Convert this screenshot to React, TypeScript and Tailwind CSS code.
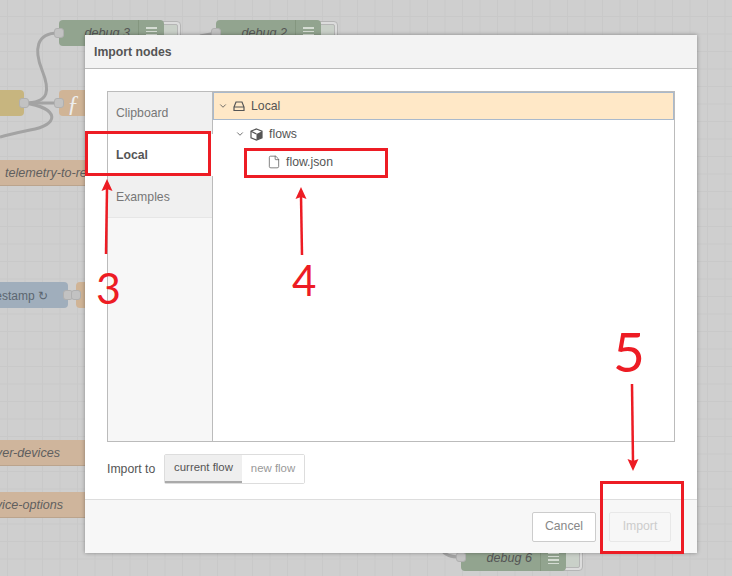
import React from 'react';
import { ChevronDown, File } from 'lucide-react';

const font = "font-['Liberation_Sans',Arial,sans-serif]";

const Port = ({ className }: { className: string }) => (
  <div className={`absolute w-[10px] h-[10px] rounded-[3px] bg-[#c2c2c2] border border-[#b0b0b0] ${className}`} />
);

const DebugNode = ({ className, label }: { className: string; label: string }) => (
  <div className={`absolute w-[122px] h-[26px] ${className}`}>
    <div className="absolute right-0 top-[1px] w-[30px] h-[25px] rounded-[4px] border border-[#b5b5b5] bg-[#dcdcdc] p-[2px]">
      <div className="w-full h-full rounded-[2px] border border-[#b5b5b5] bg-[#c9d0c8]" />
    </div>
    <div className="absolute left-0 top-0 w-[105px] h-[26px] rounded-[4px] bg-[#92a48f] flex items-center">
      <span className="flex-1 text-right pr-[8px] italic text-[12.6px] text-[#555] whitespace-nowrap">{label}</span>
      <div className="w-[26px] h-full border-l border-[#84967f] flex flex-col items-center justify-center gap-[2px]">
        <div className="w-[11px] h-[1.5px] bg-[#d5dcd3]" />
        <div className="w-[11px] h-[1.5px] bg-[#d5dcd3]" />
        <div className="w-[11px] h-[1.5px] bg-[#d5dcd3]" />
        <div className="w-[11px] h-[1.5px] bg-[#d5dcd3]" />
      </div>
    </div>
  </div>
);

const LinkNode = ({ top, label }: { top: string; label: string }) => (
  <div className={`absolute left-0 w-[90px] h-[26px] pt-[1px] bg-[#cfb59c] border-b border-[#bba48d] flex items-center italic text-[12.6px] text-[#5f5f5f] whitespace-nowrap ${top}`}>
    {label}
  </div>
);

const Canvas = () => (
  <>
    <svg className="absolute inset-0" width="732" height="576" fill="none" stroke="#a3a3a3" strokeWidth="3">
      <path d="M24 103 C 50 103, 50 90, 42 70 C 34 50, 36 33, 58 33" />
      <path d="M24 103 L 60 103" />
      <path d="M24 103 C 60 108, 60 125, 30 130 C 15 133, 8 135, 0 137" />
      <path d="M200 36 L 216 33" />
      <path d="M440 548 C 445 556, 452 557, 460 557" />
    </svg>
    <DebugNode className="left-[59px] top-[20px]" label="debug 3" />
    <DebugNode className="left-[216px] top-[20px]" label="debug 2" />
    <DebugNode className="left-[461px] top-[545px]" label="debug 6" />
    <Port className="left-[54px] top-[28px]" />
    <Port className="left-[211px] top-[28px]" />
    <Port className="left-[456px] top-[552px]" />
    <div className="absolute left-0 top-[90px] w-[24px] h-[26px] rounded-r-[4px] bg-[#c7b57f]" />
    <div className="absolute left-[59px] top-[90px] w-[30px] h-[26px] rounded-[4px] bg-[#d0b496] pl-[8px] text-[24px] leading-[26px] italic text-[#eeeeee] font-['Liberation_Serif',serif]">ƒ</div>
    <Port className="left-[19px] top-[98px]" />
    <Port className="left-[54px] top-[98px]" />
    <LinkNode top="top-[160px] pl-[5px]" label="telemetry-to-rem" />
    <div className="absolute left-0 top-[282px] w-[68px] h-[26px] pt-[1px] rounded-r-[4px] bg-[#a0aebc] flex items-center justify-end pr-[20px] text-[12px] text-[#5c6670] whitespace-nowrap">estamp ↻</div>
    <div className="absolute left-[76px] top-[282px] w-[14px] h-[26px] rounded-l-[4px] bg-[#d0b496]" />
    <Port className="left-[63px] top-[290px]" />
    <Port className="left-[71px] top-[290px]" />
    <LinkNode top="top-[440px] justify-end pr-[30px]" label="ver-devices" />
    <LinkNode top="top-[492px] justify-end pr-[27px]" label="vice-options" />
  </>
);

const Annotations = () => (
  <>
    <div className="absolute left-[85px] top-[131px] w-[126px] h-[45px] border-[3px] border-[#ed1c24]" />
    <div className="absolute left-[244px] top-[148px] w-[144px] h-[30px] border-[3px] border-[#ed1c24]" />
    <div className="absolute left-[600px] top-[481px] w-[84px] h-[73px] border-[3px] border-[#ed1c24]" />
    <svg className="absolute inset-0" width="732" height="576" fill="#ed1c24" stroke="#ed1c24">
      <path d="M106 254 L107 188" strokeWidth="2.5" />
      <path d="M107 179 L112.5 191 L107 189 L101.5 191 Z" strokeWidth="0" />
      <path d="M302 255 L301 196" strokeWidth="2.5" />
      <path d="M301 187 L306.5 199 L301 197 L295.5 199 Z" strokeWidth="0" />
      <path d="M632 384 L633 462" strokeWidth="2.5" />
      <path d="M633 471 L627.5 459 L633 461 L638.5 459 Z" strokeWidth="0" />
    </svg>
    <span className="absolute left-[96px] top-[261px] text-[43px] leading-[54px] text-[#ed1c24] font-['Lato',sans-serif]">3</span>
    <span className="absolute left-[292px] top-[253px] text-[42px] leading-[54px] text-[#ed1c24] font-['Lato',sans-serif]">4</span>
    <span className="absolute left-[613px] top-[316px] text-[55px] leading-[70px] text-[#ed1c24] font-['Lato',sans-serif]">5</span>
  </>
);

const DriveIcon = () => (
  <svg width="12" height="12" viewBox="0 0 12 12" fill="none" stroke="#555" strokeWidth="1.2" className="mr-[6px]">
    <path d="M3 2 H9 L11 7 V10.5 H1 V7 Z M1 7 H11" />
  </svg>
);

const CubeIcon = () => (
  <svg width="13" height="13" viewBox="0 0 13 13" className="mr-[6px]">
    <path d="M6.5 1 L12 3.2 V9.8 L6.5 12 L1 9.8 V3.2 Z" fill="none" stroke="#555" strokeWidth="1.2" />
    <path d="M6.5 6 L12 3.2 V9.8 L6.5 12 Z" fill="#555" />
    <path d="M1 3.2 L6.5 6" fill="none" stroke="#555" strokeWidth="1.2" />
  </svg>
);

const Dialog = () => (
  <div className="absolute left-[85px] top-[35px] w-[612px] h-[518px] bg-white flex flex-col shadow-[0_0_4px_rgba(0,0,0,0.35)] text-[12.25px] text-[#555]">
    <div className="h-[34px] shrink-0 pt-[1px] bg-[#f3f3f3] border-b border-[#bbb] flex items-center pl-[9px] font-bold">Import nodes</div>
    <div className="flex-1 pt-[22px] px-[22px]">
      <div className="h-[351px] flex border border-[#bbb]">
        <div className="w-[105px] shrink-0 bg-[#f7f7f7] border-r border-[#bbb] flex flex-col">
          <div className="h-[42px] bg-[#f0f0f0] text-[#777] flex items-center pl-[8px]">Clipboard</div>
          <div className="h-[42px] -mr-px bg-white font-bold flex items-center pl-[8px]">Local</div>
          <div className="h-[42px] pt-[1px] bg-[#f0f0f0] border-b border-[#e6e6e6] text-[#777] flex items-center pl-[8px]">Examples</div>
        </div>
        <div className="flex-1 flex flex-col">
          <div className="h-[28px] bg-[#ffe8c7] border border-[#a9b9cc] flex items-center pl-[4px]">
            <ChevronDown size={10} strokeWidth={2} className="mr-[5px]" />
            <DriveIcon />
            Local
          </div>
          <div className="h-[28px] flex items-center pl-[22px]">
            <ChevronDown size={10} strokeWidth={2} className="mr-[5px]" />
            <CubeIcon />
            flows
          </div>
          <div className="h-[28px] flex items-center pl-[54px]">
            <File size={14} strokeWidth={1.25} className="mr-[5px]" />
            flow.json
          </div>
        </div>
      </div>
      <div className="mt-[12px] flex items-center">
        <span className="w-[57px]">Import to</span>
        <div className="h-[30px] flex border border-[#ddd] rounded-[2px] text-[11.4px]">
          <div className="w-[77px] bg-[#efefef] border-b-2 border-[#aaa] flex items-center justify-center">current flow</div>
          <div className="w-[62px] bg-white text-[#999] flex items-center justify-center">new flow</div>
        </div>
      </div>
    </div>
    <div className="h-[54px] shrink-0 bg-[#f7f7f7] border-t border-[#ddd] flex items-center justify-end gap-[13px] pr-[26px]">
      <div className="w-[64px] h-[30px] bg-white border border-[#ccc] rounded-[2px] flex items-center justify-center text-[#888]">Cancel</div>
      <div className="w-[62px] h-[30px] border border-[#e8e8e8] rounded-[2px] flex items-center justify-center text-[#ccc]">Import</div>
    </div>
  </div>
);

export default function App() {
  return (
    <div className={`relative w-[732px] h-[576px] overflow-hidden bg-[#cfcfcf] bg-[linear-gradient(#c9c9c9_1px,transparent_1px),linear-gradient(90deg,#c9c9c9_1px,transparent_1px)] bg-[size:17.5px_17.5px] bg-[position:7px_16px] ${font}`}>
      <Canvas />
      <Dialog />
      <Annotations />
    </div>
  );
}
